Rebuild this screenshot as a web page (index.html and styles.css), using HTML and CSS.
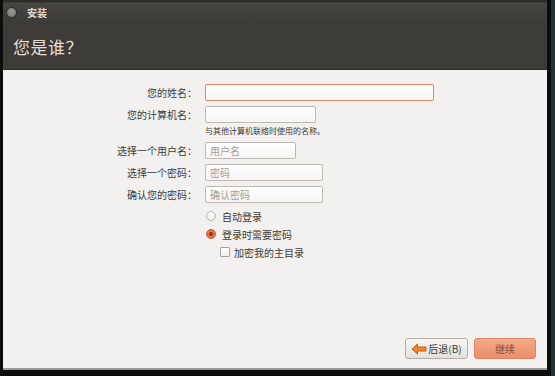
FILE: index.html
```html
<!DOCTYPE html>
<html lang="zh-CN">
<head>
<meta charset="utf-8">
<title>安装</title>
<link rel="stylesheet" href="styles.css">
</head>
<body>
<div class="frame">
  <div class="window">
    <div class="titlebar">
      <span class="close-btn"></span>
      <span class="title">安装</span>
    </div>
    <div class="header">
      <h1>您是谁？</h1>
    </div>
    <div class="content">
      <div class="form">
        <label class="lbl">您的姓名：</label>
        <div class="field"><input class="inp inp-name focus" type="text"></div>

        <label class="lbl">您的计算机名：</label>
        <div class="field"><input class="inp inp-host" type="text"></div>

        <span></span>
        <div class="hint">与其他计算机联络时使用的名称。</div>

        <label class="lbl">选择一个用户名：</label>
        <div class="field"><input class="inp inp-user" type="text" placeholder="用户名"></div>

        <label class="lbl">选择一个密码：</label>
        <div class="field"><input class="inp inp-pw" type="password" placeholder="密码"></div>

        <label class="lbl">确认您的密码：</label>
        <div class="field"><input class="inp inp-pw" type="password" placeholder="确认密码"></div>

        <span></span>
        <div class="options">
          <div class="opt"><span class="radio"></span><span>自动登录</span></div>
          <div class="opt"><span class="radio on"></span><span>登录时需要密码</span></div>
          <div class="opt sub"><span class="check"></span><span>加密我的主目录</span></div>
        </div>
      </div>
      <div class="buttons">
        <button class="btn back">
          <svg width="16" height="12" viewBox="0 0 16 12"><path d="M1 6 L6.5 1 L6.5 4 L15 4 L15 8 L6.5 8 L6.5 11 Z" fill="#f08a2c" stroke="#b85a18" stroke-width="1" stroke-linejoin="round"/></svg>后退(B)
        </button>
        <button class="btn next">继续</button>
      </div>
    </div>
  </div>
</div>
</body>
</html>
```
FILE: styles.css
```css
* { box-sizing: border-box; }
html, body { margin: 0; padding: 0; }
body {
  width: 555px;
  height: 376px;
  background: #0c0c0c;
  font-family: "Noto Sans CJK SC", "Noto Sans", sans-serif;
  overflow: hidden;
}
.frame {
  width: 555px;
  height: 376px;
  padding: 0 4px 6px 3px;
  background: #0c0c0c;
  border-right: 4px solid #1d3437;
}
.window {
  width: 544px;
  height: 370px;
  display: flex;
  flex-direction: column;
  background: #f2f1f0;
  border-bottom: 2px solid #9c9a96;
}
.titlebar {
  height: 24px;
  display: flex;
  align-items: center;
  padding-left: 3px;
  background: linear-gradient(#2d2c29 0, #2d2c29 2px, #4a4844 3px, #403f3b 12px, #3c3b37 24px);
}
.close-btn {
  width: 11px;
  height: 11px;
  border-radius: 50%;
  background: radial-gradient(circle at 50% 40%, #9a9893, #73716c);
  border: 1px solid #2e2d2a;
  margin-right: 10px;
}
.title {
  color: #dcd9d2;
  font-size: 10px;
  font-weight: bold;
}
.header {
  height: 46px;
  background: #3c3b37;
  border-bottom: 1px solid #2b2a27;
  display: flex;
  align-items: center;
  padding-left: 10px;
}
.header h1 {
  margin: 0;
  font-size: 17px;
  font-weight: normal;
  color: #e2ded6;
  letter-spacing: 0.5px;
}
.content {
  flex: 1;
  display: flex;
  flex-direction: column;
  padding-top: 14px;
}
.form {
  display: grid;
  grid-template-columns: 194px auto;
  column-gap: 8px;
  row-gap: 5px;
  align-items: center;
}
.lbl {
  text-align: right;
  font-size: 10px;
  color: #3c3b37;
  line-height: 17px;
}
.field { display: flex; }
.inp {
  height: 17px;
  border: 1px solid #bdbab5;
  border-radius: 2px;
  background: linear-gradient(#ffffff, #f6f5f4);
  font-family: "Noto Sans CJK SC", sans-serif;
  font-size: 10px;
  padding: 0 4px;
  color: #3c3b37;
  outline: none;
}
.inp::placeholder { color: #a09d98; }
.inp.focus { border-color: #e0866a; }
.inp-name { width: 229px; }
.inp-host { width: 111px; }
.inp-user { width: 91px; }
.inp-pw { width: 118px; }
.hint {
  font-size: 8px;
  color: #3c3b37;
  line-height: 10px;
  margin-top: -2px;
  margin-bottom: 1px;
}
.options {
  display: flex;
  flex-direction: column;
  gap: 6px;
  margin-top: 2px;
}
.opt {
  display: flex;
  align-items: center;
  font-size: 10px;
  color: #3c3b37;
  height: 12px;
}
.opt.sub { padding-left: 15px; }
.radio {
  width: 10px;
  height: 10px;
  border-radius: 50%;
  border: 1px solid #b4b1ac;
  background: linear-gradient(#ffffff, #efeeec);
  margin: 0 6px 0 1px;
}
.radio.on {
  border-color: #c45a36;
  background: radial-gradient(circle, #8e3418 0, #8e3418 1.5px, #ec7650 2.5px, #e5653f 100%);
}
.check {
  width: 10px;
  height: 10px;
  border: 1px solid #a8a5a0;
  border-radius: 1px;
  background: linear-gradient(#ffffff, #efeeec);
  margin-right: 4px;
}
.buttons {
  margin-top: auto;
  display: flex;
  justify-content: flex-end;
  gap: 6px;
  padding-right: 11px;
  padding-bottom: 9px;
}
.btn {
  height: 21px;
  border-radius: 3px;
  font-family: "Noto Sans CJK SC", sans-serif;
  font-size: 10px;
  display: flex;
  align-items: center;
  justify-content: center;
  padding: 0;
}
.btn.back {
  width: 63px;
  border: 1px solid #b3b0ab;
  background: linear-gradient(#f8f7f6, #e3e1de);
  color: #3c3b37;
  gap: 1px;
}
.btn.next {
  width: 62px;
  border: 1px solid #d98563;
  background: linear-gradient(#f5a988, #eb8e6b);
  color: #86513d;
}
```
